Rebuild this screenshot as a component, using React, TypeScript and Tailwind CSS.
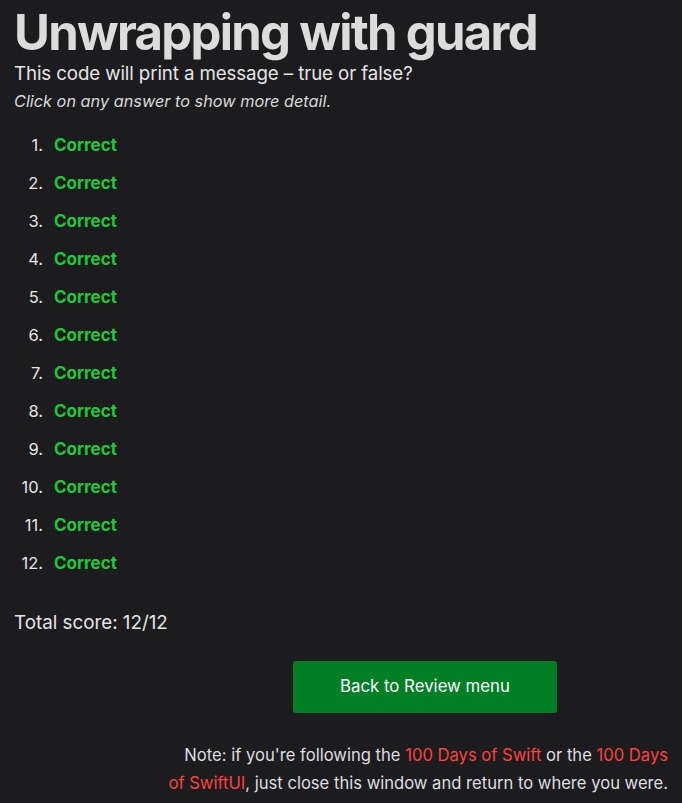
export default function App() {
  const items = Array.from({ length: 12 }, (_, i) => i + 1);
  return (
    <div className="min-h-screen bg-[#1c1c1e] text-[#e5e5e7] px-[14px] pb-4 font-['Inter','Noto_Sans',sans-serif]">
      <h1 className="text-[49px] font-bold leading-[60px] text-[#dcdcdc] pt-[3px] tracking-[-1.7px]">
        Unwrapping with guard
      </h1>
      <p className="text-[18.7px] leading-[24px] -mt-[1px] tracking-[-0.1px]">This code will print a message – true or false?</p>
      <p className="text-[16.3px] italic leading-[28px] mt-[1px] text-[#d8d8da]">Click on any answer to show more detail.</p>

      <ol className="mt-[11px]">
        {items.map((n) => (
          <li key={n} className="flex text-[16px] leading-[24px] py-[7px]">
            <span className="w-[29px] text-right text-[16.5px] text-[#e5e5e7]">{n}.</span>
            <span className="ml-[11px] font-bold text-[17px] text-[#1fc73a]">Correct</span>
          </li>
        ))}
      </ol>

      <p className="text-[18.8px] leading-[24px] mt-[29px]">Total score: 12/12</p>

      <div className="flex justify-center mt-[26px] pl-[168px]">
        <button className="w-[264px] h-[52px] rounded-[3px] bg-[#007f25] text-white text-[16.8px]">
          Back to Review menu
        </button>
      </div>

      <p className="text-right text-[16.6px] leading-[28px] mt-[28px] text-[#dedee0]">
        Note: if you're following the <span className="text-[#ff4040]">100 Days of Swift</span> or the{" "}
        <span className="text-[#ff4040]">100 Days<br />of SwiftUI</span>, just close this window and return to where you were.
      </p>
    </div>
  );
}
